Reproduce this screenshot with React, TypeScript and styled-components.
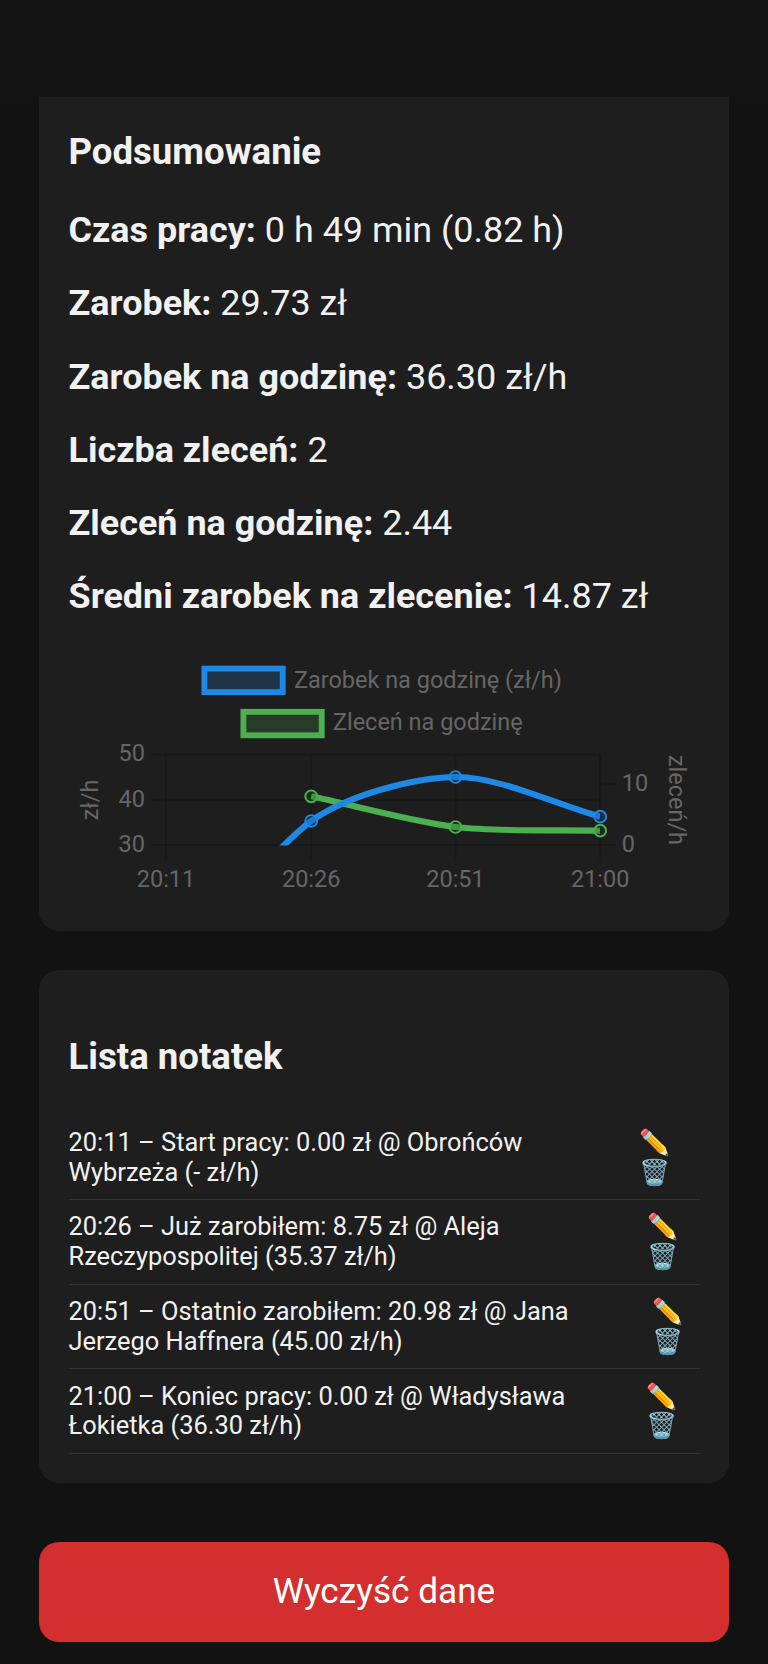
import React from 'react';
import styled, { createGlobalStyle } from 'styled-components';

const GlobalStyle = createGlobalStyle`
  *, *::before, *::after { box-sizing: border-box; }
  body {
    margin: 0;
    background: #121212;
    color: #f1f1f1;
    font-family: Roboto, sans-serif;
  }
  h2, p, ul { margin: 0; padding: 0; }
`;

const Screen = styled.div`
  min-height: 1664px;
  display: flex;
  flex-direction: column;
`;

const StatusBar = styled.header`
  height: 97px;
  background: #141414;
`;

const Content = styled.main`
  display: flex;
  flex-direction: column;
  padding: 0 39px 22px;
`;

const Card = styled.section<{ $height: number; $top: number; $flatTop?: boolean }>`
  height: ${(p) => p.$height}px;
  padding: ${(p) => p.$top}px 29.5px 0;
  border-radius: ${(p) => (p.$flatTop ? '0 0 20px 20px' : '20px')};
  background: #1e1e1e;
  & + & { margin-top: 39px; }
`;

const Heading = styled.h2`
  font-size: 36.6px;
  font-weight: 700;
  line-height: 42px;
`;

const Stats = styled.div`
  display: grid;
  grid-auto-rows: 41.3px;
  row-gap: 32px;
  margin-top: 37px;
`;

const Stat = styled.p`
  font-size: 35.95px;
  line-height: 41px;
  white-space: nowrap;
`;

const Chart = styled.svg`
  display: block;
  width: 630px;
  height: 240px;
  margin-top: 42.2px;
  font-size: 23.47px;
`;

const Notes = styled.ul`
  list-style: none;
  margin-top: 37.4px;
`;

const Note = styled.li`
  display: flex;
  justify-content: space-between;
  padding: 12.4px 0 11.6px;
  border-bottom: 1px solid #333;
  font-size: 25.42px;
  line-height: 29.8px;
`;

const NoteText = styled.span`
  white-space: pre-line;
`;

const Actions = styled.div<{ $width: number }>`
  display: flex;
  flex-direction: column;
  align-items: center;
  width: ${(p) => p.$width}px;
`;

const IconButton = styled.button`
  border: 0;
  padding: 0;
  background: none;
  font: inherit;
  font-size: 25px;
  height: 29.8px;
`;

const ClearButton = styled.button`
  height: 100px;
  margin-top: 59px;
  padding: 0 0 2px;
  border: 0;
  border-radius: 20px;
  background: #d32f2f;
  color: #fff;
  font-family: inherit;
  font-size: 35.2px;
`;

const stats = [
  ['Czas pracy:', '0 h 49 min (0.82 h)'],
  ['Zarobek:', '29.73 zł'],
  ['Zarobek na godzinę:', '36.30 zł/h'],
  ['Liczba zleceń:', '2'],
  ['Zleceń na godzinę:', '2.44'],
  ['Średni zarobek na zlecenie:', '14.87 zł'],
];

const notes = [
  { text: '20:11 – Start pracy: 0.00 zł @ Obrońców\nWybrzeża (- zł/h)', width: 90 },
  { text: '20:26 – Już zarobiłem: 8.75 zł @ Aleja\nRzeczypospolitej (35.37 zł/h)', width: 75 },
  { text: '20:51 – Ostatnio zarobiłem: 20.98 zł @ Jana\nJerzego Haffnera (45.00 zł/h)', width: 65 },
  { text: '21:00 – Koniec pracy: 0.00 zł @ Władysława\nŁokietka (36.30 zł/h)', width: 77 },
];

const BLUE = '#1e88e5';
const GREEN = '#4caf50';

const times: [string, number][] = [['20:11', 165.5], ['20:26', 310.7], ['20:51', 455], ['21:00', 599.7]];
const leftTicks: [string, number][] = [['50', 754.5], ['40', 800], ['30', 845]];
const rightTicks: [string, number][] = [['10', 784], ['0', 845]];
const bluePoints = [[310.7, 821], [455, 777], [599.7, 816.7]];
const greenPoints = [[310.7, 796.3], [455, 827], [599.7, 830.7]];

function EarningsChart() {
  return (
    <Chart viewBox="68.5 660 630 240">
      <defs>
        <clipPath id="plot"><rect x="165" y="750" width="434.7" height="95.5" /></clipPath>
      </defs>
      <g strokeWidth="5.87">
        <rect x="203.9" y="668.6" width="78.3" height="23.5" fill={BLUE} fillOpacity="0.2" stroke={BLUE} />
        <rect x="242.9" y="711.8" width="78.3" height="23.5" fill={GREEN} fillOpacity="0.2" stroke={GREEN} />
      </g>
      <g fill="#666">
        <text x="293.4" y="687.7">Zarobek na godzinę (zł/h)</text>
        <text x="332.4" y="730">Zleceń na godzinę</text>
        {leftTicks.map(([t, y]) => <text key={t} x="144.5" y={y + 6.5} textAnchor="end">{t}</text>)}
        {rightTicks.map(([t, y]) => <text key={t} x="621.3" y={y + 7}>{t}</text>)}
        {times.map(([t, x]) => <text key={t} x={x} y="887.4" textAnchor="middle">{t}</text>)}
        <text transform="translate(97.5 800) rotate(-90)" textAnchor="middle">zł/h</text>
        <text transform="translate(668.5 800) rotate(90)" textAnchor="middle">zleceń/h</text>
      </g>
      <g stroke="#000" strokeOpacity="0.1" strokeWidth="2">
        {leftTicks.map(([t, y]) => <line key={t} x1="150" x2="599.7" y1={y} y2={y} />)}
        {rightTicks.map(([t, y]) => <line key={t} x1="599.7" x2="615.5" y1={y} y2={y} />)}
        {times.map(([t, x]) => <line key={t} x1={x} x2={x} y1="754.5" y2="860.5" />)}
        <line x1="599.7" x2="599.7" y1="754.5" y2="845" />
      </g>
      <g fill="none" strokeWidth="6.1" clipPath="url(#plot)">
        <path stroke={GREEN} d="M310.7 796.3C354 805.5 411.3 821.8 455 827C498.1 832.1 556.5 829.6 599.7 830.7" />
        <path stroke={BLUE} d="M165.5 981C209.3 933 264 857 310.7 821C346.4 795.8 411.6 777.6 455 777C498.3 776.4 556.5 805 599.7 816.7" />
      </g>
      {greenPoints.map(([x, y]) => (
        <circle key={x} cx={x} cy={y} r="5.87" fill="#0f5f14" fillOpacity="0.28" stroke={GREEN} strokeWidth="1.96" />
      ))}
      {bluePoints.map(([x, y]) => (
        <circle key={x} cx={x} cy={y} r="5.87" fill="#0d5ba6" fillOpacity="0.28" stroke={BLUE} strokeWidth="1.96" />
      ))}
    </Chart>
  );
}

export default function App() {
  return (
    <>
      <GlobalStyle />
      <Screen>
        <StatusBar />
        <Content>
          <Card $height={834} $top={34} $flatTop>
            <Heading>Podsumowanie</Heading>
            <Stats>
              {stats.map(([label, value]) => (
                <Stat key={label}><strong>{label}</strong> {value}</Stat>
              ))}
            </Stats>
            <EarningsChart />
          </Card>
          <Card $height={513} $top={66}>
            <Heading>Lista notatek</Heading>
            <Notes>
              {notes.map((note) => (
                <Note key={note.text}>
                  <NoteText>{note.text}</NoteText>
                  <Actions $width={note.width}>
                    <IconButton aria-label="Edytuj">✏️</IconButton>
                    <IconButton aria-label="Usuń">🗑️</IconButton>
                  </Actions>
                </Note>
              ))}
            </Notes>
          </Card>
          <ClearButton>Wyczyść dane</ClearButton>
        </Content>
      </Screen>
    </>
  );
}
